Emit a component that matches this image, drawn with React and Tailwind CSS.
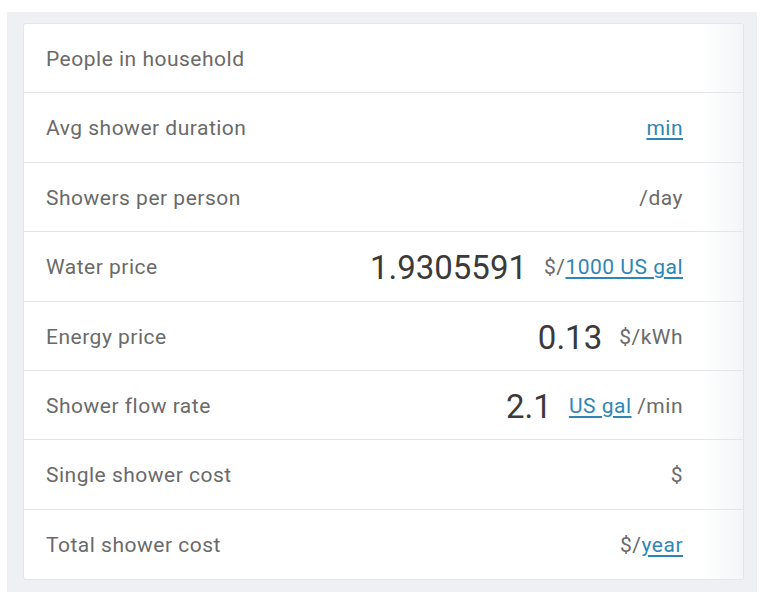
import React from 'react';

const filas = [
    { label: 'People in household' },
    { label: 'Avg shower duration', unit: [{ t: 'min', link: true }] },
    { label: 'Showers per person', unit: [{ t: '/day' }] },
    { label: 'Water price', value: '1.9305591', unit: [{ t: '$/' }, { t: '1000 US gal', link: true }] },
    { label: 'Energy price', value: '0.13', unit: [{ t: '$/kWh' }] },
    { label: 'Shower flow rate', value: '2.1', unit: [{ t: 'US gal', link: true }, { t: ' /min' }] },
    { label: 'Single shower cost', unit: [{ t: '$' }] },
    { label: 'Total shower cost', unit: [{ t: '$/' }, { t: 'year', link: true }] },
];

export default function App() {
    return (
        <div className="w-[762px] h-[598px] bg-white pt-[12px] pl-[7px] font-['Roboto',sans-serif]">
            <div className="w-[750px] h-[580px] bg-[#eef0f4] pt-[11px] pl-[16px]">
                <div className="w-[721px] bg-white border border-[#e3e5e9] rounded-[3px] overflow-hidden">
                    {filas.map((f, i) => (
                        <div
                            key={f.label}
                            className={`flex items-stretch h-[69.4px] ${i < filas.length - 1 ? 'border-b border-[#e3e5e9]' : ''}`}
                        >
                            <div className="flex-1 flex items-center pl-[22px] pt-[3px] text-[21px] tracking-[0.5px] text-[#6a6a6a]">
                                {f.label}
                            </div>
                            <div className="flex items-center pr-[19px] pt-[3px]">
                                {f.value && (
                                    <span className="text-[33px] text-[#3a3a3a] mr-[17px]">{f.value}</span>
                                )}
                                <span className="text-[21px] tracking-[0.5px] text-[#6a6a6a] whitespace-pre">
                                    {(f.unit || []).map((u, j) =>
                                        u.link ? (
                                            <span key={j} className="text-[#2f86b5] underline underline-offset-[3px]">{u.t}</span>
                                        ) : (
                                            <span key={j}>{u.t}</span>
                                        )
                                    )}
                                </span>
                            </div>
                            <div className="w-[41px] bg-gradient-to-r from-white to-[#f4f5f8]"></div>
                        </div>
                    ))}
                </div>
            </div>
        </div>
    );
}
